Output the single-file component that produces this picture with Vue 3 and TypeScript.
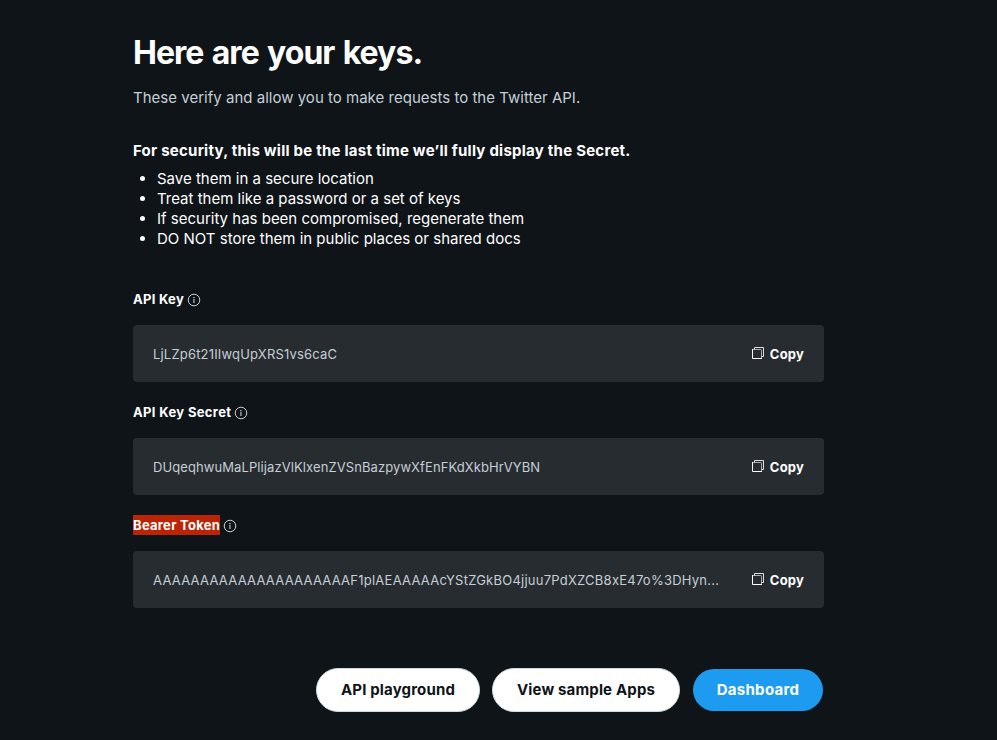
<script setup lang="ts">
interface Credential {
  kind: string
  label: string
  value: string
}

const tips: string[] = [
  'Save them in a secure location',
  'Treat them like a password or a set of keys',
  'If security has been compromised, regenerate them',
  'DO NOT store them in public places or shared docs',
]

const credentials: Credential[] = [
  { kind: 'key', label: 'API Key', value: 'LjLZp6t21IIwqUpXRS1vs6caC' },
  { kind: 'secret', label: 'API Key Secret', value: 'DUqeqhwuMaLPlijazVlKlxenZVSnBazpywXfEnFKdXkbHrVYBN' },
  {
    kind: 'bearer',
    label: 'Bearer Token',
    value: 'AAAAAAAAAAAAAAAAAAAAAF1plAEAAAAAcYStZGkBO4jjuu7PdXZCB8xE47o%3DHyn...',
  },
]
</script>

<template>
  <main class="page">
    <h1 class="title">Here are your keys.</h1>
    <p class="subtitle">These verify and allow you to make requests to the Twitter API.</p>
    <h2 class="warning">For security, this will be the last time we’ll fully display the Secret.</h2>
    <ul class="tips">
      <li v-for="tip in tips" :key="tip">{{ tip }}</li>
    </ul>

    <section v-for="item in credentials" :key="item.kind" class="credential" :class="item.kind">
      <div class="label">
        <span class="name">{{ item.label }}</span>
        <svg class="info" viewBox="0 0 14 14" width="14" height="14">
          <circle cx="7" cy="7" r="5.8" fill="none" stroke="currentColor" stroke-width="1" />
          <path d="M6.3 4h1.3v1.2H6.3zM6.4 6h1.1v4H6.4z" fill="currentColor" />
        </svg>
      </div>
      <div class="box">
        <span class="value">{{ item.value }}</span>
        <button class="copy" type="button">
          <svg viewBox="0 0 14 14" width="14" height="14" fill="none" stroke="currentColor">
            <path d="M3.5 3.5V1.5h9v9h-2" opacity=".85" />
            <path d="M1.5 3.5h8.2a.8.8 0 0 1 .8.8v8.2" opacity=".6" />
            <path d="M1.5 3v9.5H11" />
          </svg>
          <span>Copy</span>
        </button>
      </div>
    </section>

    <footer class="actions">
      <button class="btn playground" type="button">API playground</button>
      <button class="btn samples" type="button">View sample Apps</button>
      <button class="btn primary" type="button">Dashboard</button>
    </footer>
  </main>
</template>

<style>
body {
  background: #0f1419;
}
</style>

<style scoped>
.page {
  box-sizing: border-box;
  width: 997px;
  height: 740px;
  padding: 33px 173px 0 133px;
  background: #0f1419;
  color: #fff;
  font-family: Inter, "Liberation Sans", sans-serif;
  overflow: hidden;
}

.title,
.subtitle,
.warning,
.tips {
  margin: 0;
  white-space: nowrap;
}

.title {
  font-size: 32px;
  line-height: 40px;
  font-weight: 650;
  letter-spacing: -0.95px;
  word-spacing: 1.6px;
}

.subtitle {
  margin-top: 15px;
  font-size: 15px;
  line-height: 20px;
  letter-spacing: 0.015px;
  color: #c4cfd6;
}

.warning {
  margin-top: 33px;
  font-size: 15px;
  line-height: 20px;
  font-weight: 700;
  letter-spacing: 0.24px;
}

.tips {
  margin-top: 8px;
  padding-left: 24px;
  font-size: 15px;
  line-height: 20px;
}

.credential {
  height: 113px;
}

.tips + .credential {
  margin-top: 40px;
}

.label {
  display: flex;
  align-items: center;
  gap: 3px;
  height: 20px;
  margin-bottom: 16px;
}

.name {
  font-size: 13px;
  line-height: 20px;
  font-weight: 700;
  letter-spacing: 0.28px;
}

.secret .name {
  letter-spacing: 0.35px;
}

.bearer .name {
  background: #bb2405;
}

.info {
  margin-top: 1px;
  color: #c4cfd6;
}

.box {
  display: flex;
  align-items: center;
  justify-content: space-between;
  box-sizing: border-box;
  width: 691px;
  height: 57px;
  padding: 1px 20px 0;
  border-radius: 4px;
  background: #272c30;
}

.value {
  font-size: 13px;
  line-height: 20px;
  color: #c4cfd6;
  white-space: nowrap;
}

.key .value {
  letter-spacing: 0.18px;
}

.secret .value {
  letter-spacing: 0.09px;
}

.bearer .value {
  letter-spacing: 0.245px;
}

.copy {
  display: flex;
  align-items: center;
  gap: 5px;
  padding: 0;
  border: 0;
  background: none;
  color: #fff;
  font: 700 13px/20px Inter, "Liberation Sans", sans-serif;
  letter-spacing: 0.2px;
}

.copy svg {
  margin-top: -2px;
}

.actions {
  display: flex;
  align-items: center;
  justify-content: flex-end;
  width: 690px;
  margin-top: 40px;
}

.btn {
  box-sizing: border-box;
  height: 44px;
  padding: 0;
  border: 1px solid #cfd9de;
  border-radius: 22px;
  background: #fff;
  color: #0f1419;
  font: 700 15px/20px Inter, "Liberation Sans", sans-serif;
  letter-spacing: 0.16px;
}

.playground {
  width: 164px;
  margin-right: 12px;
}

.samples {
  width: 188px;
  margin-right: 13px;
}

.primary {
  width: 130px;
  height: 42px;
  border: 0;
  background: #1d9bf0;
  color: #fff;
  letter-spacing: 0.3px;
}
</style>
